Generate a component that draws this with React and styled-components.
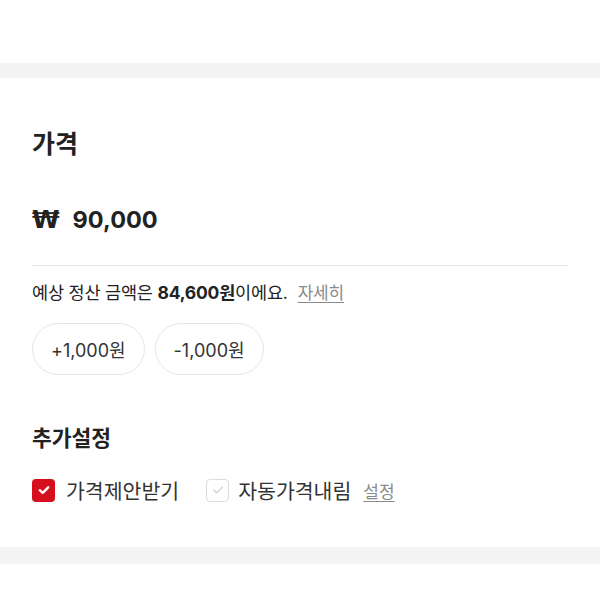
import React, { useState } from "react";
import styled, { createGlobalStyle } from "styled-components";

const GlobalStyle = createGlobalStyle`
  body {
    margin: 0;
    background: #fff;
    font-family: Inter, "Noto Sans CJK KR", sans-serif;
    color: #222;
  }
`;

const Page = styled.div`
  width: 600px;
  height: 600px;
  display: flex;
  flex-direction: column;
  overflow: hidden;
`;

const TopSpace = styled.div`
  height: 63px;
`;

const Band = styled.div`
  height: ${(p) => p.$h}px;
  background: #f4f4f4;
`;

const Section = styled.section`
  padding: 47px 32px 45px;
`;

const Title = styled.h2`
  margin: 0;
  font-family: "Noto Sans CJK KR", sans-serif;
  font-size: 25px;
  line-height: 34px;
  font-weight: 700;
  color: #222;
`;

const Price = styled.div`
  margin-top: 45px;
  display: flex;
  align-items: center;
  gap: 13px;
  line-height: 32px;
  font-weight: 700;
  color: #222;
`;

const Won = styled.span`
  font-family: "DejaVu Sans", sans-serif;
  font-size: 25px;
  font-weight: 700;
`;

const Amount = styled.span`
  font-family: Inter, sans-serif;
  font-size: 23.5px;
`;

const Divider = styled.hr`
  margin: 29px 0 0;
  border: 0;
  border-top: 1px solid #e2e2e2;
`;

const Info = styled.p`
  margin: 15px 0 0;
  font-size: 17.5px;
  line-height: 24px;
  color: #222;
  letter-spacing: -0.2px;

  & b {
    font-weight: 700;
  }
`;

const LinkText = styled.a`
  margin-left: ${(p) => p.$gap}px;
  color: #8a8a8a;
  text-decoration: underline;
  text-underline-offset: 3px;
  font-size: ${(p) => p.$size}px;
  cursor: pointer;
`;

const ButtonRow = styled.div`
  margin-top: 18px;
  display: flex;
  gap: 10px;
`;

const PillButton = styled.button`
  height: 52px;
  padding: 0 18px;
  border: 1px solid #e6e6e6;
  border-radius: 26px;
  background: #fff;
  font-family: Inter, "Noto Sans CJK KR", sans-serif;
  font-size: 18px;
  color: #333;
  cursor: pointer;
`;

const SubTitle = styled.h3`
  margin: 48px 0 0;
  font-family: "Noto Sans CJK KR", sans-serif;
  font-size: 21.5px;
  line-height: 28px;
  font-weight: 700;
  color: #222;
`;

const OptionRow = styled.div`
  margin-top: 27px;
  display: flex;
  align-items: center;
  height: 24px;
`;

const Option = styled.label`
  display: flex;
  align-items: center;
  gap: ${(p) => p.$gap}px;
  margin-right: ${(p) => p.$mr}px;
  font-family: "Noto Sans CJK KR", sans-serif;
  font-size: 20.5px;
  color: #333;
  cursor: pointer;
`;

const Box = styled.span`
  width: 23px;
  height: 23px;
  box-sizing: border-box;
  border-radius: 4px;
  display: flex;
  align-items: center;
  justify-content: center;
  background: ${(p) => (p.$on ? "#d50f1c" : "#fff")};
  border: ${(p) => (p.$on ? "none" : "1.5px solid #dcdcdc")};
`;

function Check({ on }) {
  return (
    <svg width="14" height="14" viewBox="0 0 14 14" fill="none">
      <path
        d="M2.8 7.2 L5.7 9.8 L11.2 4.3"
        stroke={on ? "#fff" : "#d8d8d8"}
        strokeWidth={on ? 2.4 : 1.6}
        strokeLinecap="round"
        strokeLinejoin="round"
      />
    </svg>
  );
}

export default function App() {
  const [offer, setOffer] = useState(true);
  const [autoDown, setAutoDown] = useState(false);

  return (
    <Page>
      <GlobalStyle />
      <TopSpace />
      <Band $h={15} />
      <Section>
        <Title>가격</Title>
        <Price>
          <Won>₩</Won>
          <Amount>90,000</Amount>
        </Price>
        <Divider />
        <Info>
          예상 정산 금액은 <b>84,600원</b>이에요.
          <LinkText $gap={10} $size={17}>자세히</LinkText>
        </Info>
        <ButtonRow>
          <PillButton>+1,000원</PillButton>
          <PillButton>-1,000원</PillButton>
        </ButtonRow>
        <SubTitle>추가설정</SubTitle>
        <OptionRow>
          <Option $gap={11} $mr={27} onClick={() => setOffer(!offer)}>
            <Box $on={offer}>
              <Check on={offer} />
            </Box>
            가격제안받기
          </Option>
          <Option $gap={9} $mr={12} onClick={() => setAutoDown(!autoDown)}>
            <Box $on={autoDown}>
              <Check on={autoDown} />
            </Box>
            자동가격내림
          </Option>
          <LinkText $gap={0} $size={17}>설정</LinkText>
        </OptionRow>
      </Section>
      <Band $h={17} />
    </Page>
  );
}
